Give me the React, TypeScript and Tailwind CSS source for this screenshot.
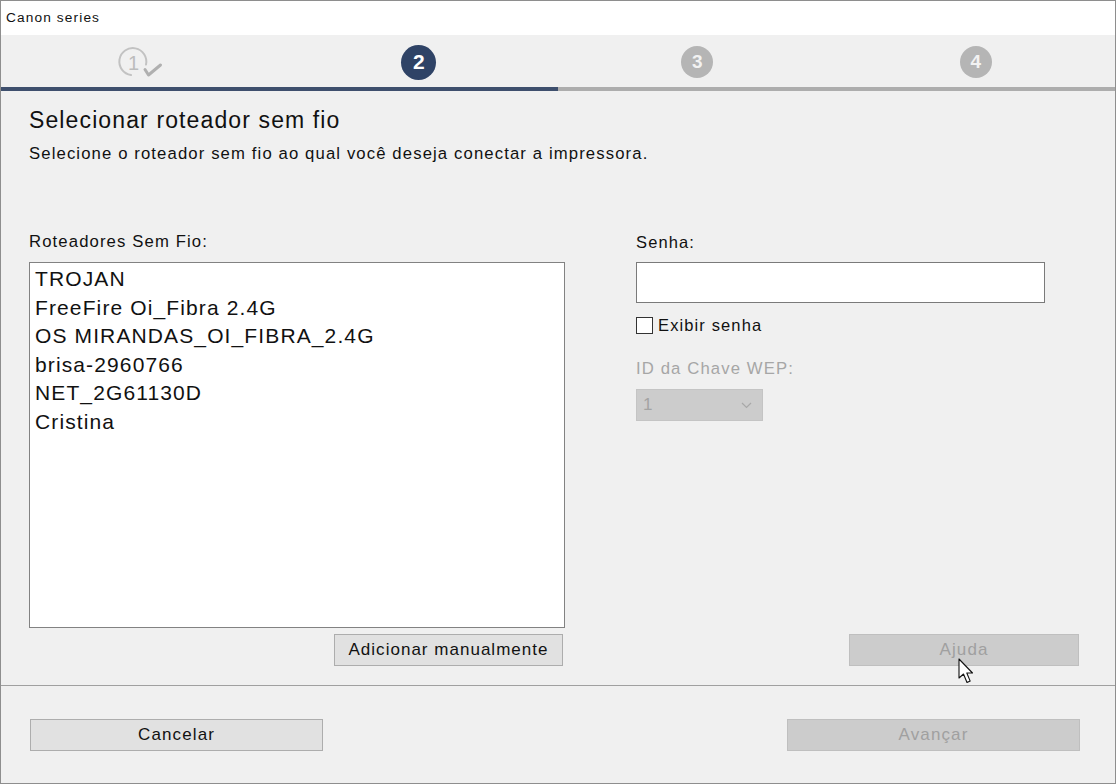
import React from 'react';

const routers = [
  'TROJAN',
  'FreeFire Oi_Fibra 2.4G',
  'OS MIRANDAS_OI_FIBRA_2.4G',
  'brisa-2960766',
  'NET_2G61130D',
  'Cristina',
];

function StepDone() {
  return (
    <svg width="52" height="40" viewBox="0 0 52 40" className="block">
      <path
        d="M33 21.6 A13.5 13.5 0 1 0 18 32"
        fill="none"
        stroke="#c2c2c2"
        strokeWidth="2"
        strokeLinecap="round"
      />
      <text
        x="21"
        y="26.5"
        textAnchor="middle"
        fontFamily="Liberation Sans, Arial, sans-serif"
        fontSize="20"
        fill="#bcbcbc"
      >
        1
      </text>
      <path
        d="M32 26.5 L35.5 32 L47.5 22"
        fill="none"
        stroke="#b0b0b0"
        strokeWidth="3"
        strokeLinecap="round"
        strokeLinejoin="round"
      />
    </svg>
  );
}

function StepCircle({ n, active }: { n: number; active?: boolean }) {
  return (
    <div
      className={
        active
          ? 'flex h-[35px] w-[35px] items-center justify-center rounded-full bg-[#2f4366] text-[21px] font-bold tracking-normal text-white'
          : 'flex h-[32px] w-[32px] items-center justify-center rounded-full bg-[#b5b5b5] text-[19px] font-bold tracking-normal text-[#f2f2f2]'
      }
    >
      {n}
    </div>
  );
}

function Cursor() {
  return (
    <svg width="18" height="28" viewBox="0 0 18 28" className="absolute left-[109px] top-[24px]">
      <path
        d="M1 1 L1 20 L5.5 16 L9 24.5 L12.2 23.1 L8.8 15 L14.5 15 Z"
        fill="#ffffff"
        stroke="#111111"
        strokeWidth="1.1"
        strokeLinejoin="round"
      />
    </svg>
  );
}

export default function App() {
  return (
    <div className="flex h-[784px] w-[1116px] flex-col border border-[#8e8e8e] bg-[#f0f0f0] font-['Liberation_Sans',Arial,sans-serif] tracking-[0.07em] text-[#111]">
      <div className="flex h-[34px] items-center bg-white pl-[5px] text-[13.7px]">Canon series</div>

      <div className="grid h-[52px] grid-cols-4 items-center">
        <div className="flex justify-center pr-[3px] pt-[3px]">
          <StepDone />
        </div>
        <div className="flex justify-center pt-[2px]">
          <StepCircle n={2} active />
        </div>
        <div className="flex justify-center pt-[2px]">
          <StepCircle n={3} />
        </div>
        <div className="flex justify-center pt-[2px]">
          <StepCircle n={4} />
        </div>
      </div>
      <div className="flex h-[4px]">
        <div className="w-1/2 bg-[#3e4f6d]" />
        <div className="w-1/2 bg-[#adadad]" />
      </div>

      <div className="flex h-[594px] flex-col pl-[28px]">
        <h1 className="mt-[16px] text-[23px] leading-[26px]">Selecionar roteador sem fio</h1>
        <p className="mt-[11px] text-[16.7px] leading-[20px]">
          Selecione o roteador sem fio ao qual você deseja conectar a impressora.
        </p>

        <div className="mt-[68px] flex">
          <div className="flex w-[536px] flex-col">
            <div className="text-[16.7px] leading-[20px]">Roteadores Sem Fio:</div>
            <div className="mt-[10px] h-[366px] border border-[#828282] bg-white pl-[5px] pt-[2px]">
              {routers.map((r) => (
                <div key={r} className="text-[21px] leading-[28.5px]">
                  {r}
                </div>
              ))}
            </div>
            <div className="mt-[6px] flex justify-end pr-[2px]">
              <button className="h-[32px] w-[229px] border border-[#adadad] bg-[#e1e1e1] text-[17px] tracking-[0.06em] text-[#111]">
                Adicionar manualmente
              </button>
            </div>
          </div>

          <div className="ml-[71px] flex w-[443px] flex-col">
            <div className="text-[16.5px] leading-[20px]">Senha:</div>
            <div className="mt-[10px] h-[41px] w-[409px] border border-[#7a7a7a] bg-white" />
            <label className="mt-[12px] flex h-[20px] items-center gap-[5px] text-[16.5px]">
              <span className="h-[17px] w-[17px] border border-[#333] bg-white" />
              Exibir senha
            </label>
            <div className="mt-[24px] text-[16.7px] leading-[20px] text-[#a6a6a6]">ID da Chave WEP:</div>
            <div className="mt-[10px] flex h-[32px] w-[127px] items-center justify-between border border-[#c4c4c4] bg-[#cccccc] pl-[6px] pr-[10px] text-[17px] text-[#a3a3a3]">
              <span>1</span>
              <svg width="11" height="7" viewBox="0 0 11 7">
                <path d="M1 1 L5.5 5.5 L10 1" fill="none" stroke="#a8a8a8" strokeWidth="1.2" />
              </svg>
            </div>
            <div className="relative mt-auto self-end">
              <button className="h-[32px] w-[230px] border border-[#bfbfbf] bg-[#cccccc] text-[17px] text-[#a0a0a0]">
                Ajuda
              </button>
              <Cursor />
            </div>
          </div>
        </div>
      </div>

      <div className="h-px bg-[#a0a0a0]" />

      <div className="flex flex-1 items-start justify-between pl-[29px] pr-[35px] pt-[33px]">
        <button className="h-[32px] w-[293px] border border-[#adadad] bg-[#e1e1e1] text-[17px] text-[#111]">
          Cancelar
        </button>
        <button className="h-[32px] w-[293px] border border-[#bfbfbf] bg-[#cccccc] text-[17px] text-[#a0a0a0]">
          Avançar
        </button>
      </div>
    </div>
  );
}
